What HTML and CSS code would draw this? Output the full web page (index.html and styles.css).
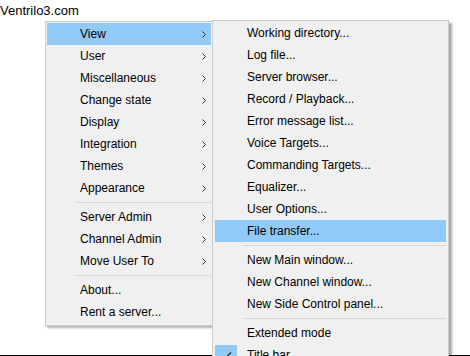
FILE: index.html
```html
<!DOCTYPE html>
<html lang="en">
<head>
  <meta charset="UTF-8">
  <title>Ventrilo menu</title>
  <link rel="stylesheet" href="styles.css">
</head>
<body>
  <div class="page">
    <div class="site">Ventrilo3.com</div>
  </div>

  <div class="menu main-menu">
    <div class="item active">View<span class="arrow"></span></div>
    <div class="item">User<span class="arrow"></span></div>
    <div class="item">Miscellaneous<span class="arrow"></span></div>
    <div class="item">Change state<span class="arrow"></span></div>
    <div class="item">Display<span class="arrow"></span></div>
    <div class="item">Integration<span class="arrow"></span></div>
    <div class="item">Themes<span class="arrow"></span></div>
    <div class="item">Appearance<span class="arrow"></span></div>
    <div class="sep"></div>
    <div class="item">Server Admin<span class="arrow"></span></div>
    <div class="item">Channel Admin<span class="arrow"></span></div>
    <div class="item">Move User To<span class="arrow"></span></div>
    <div class="sep"></div>
    <div class="item">About...</div>
    <div class="item">Rent a server...</div>
  </div>

  <div class="menu sub-menu">
    <div class="item">Working directory...</div>
    <div class="item">Log file...</div>
    <div class="item">Server browser...</div>
    <div class="item">Record / Playback...</div>
    <div class="item">Error message list...</div>
    <div class="item">Voice Targets...</div>
    <div class="item">Commanding Targets...</div>
    <div class="item">Equalizer...</div>
    <div class="item">User Options...</div>
    <div class="item active">File transfer...</div>
    <div class="sep"></div>
    <div class="item">New Main window...</div>
    <div class="item">New Channel window...</div>
    <div class="item">New Side Control panel...</div>
    <div class="sep"></div>
    <div class="item">Extended mode</div>
    <div class="item checked">
      <span class="check">
        <svg width="22" height="22" viewBox="0 0 22 22"><path d="M6 11.5 L9 14.5 L16 7.5" fill="none" stroke="#222" stroke-width="1.2"/></svg>
      </span>Title bar
    </div>
  </div>
</body>
</html>
```

FILE: styles.css
```css
body {
  margin: 0;
  font-family: "Liberation Sans", Arial, sans-serif;
  background: #fff;
  color: #000;
  overflow: hidden;
}

.page {
  height: 355px;
  border-bottom: 1px solid #000;
}

.site {
  font-size: 13px;
  line-height: 20px;
  padding-top: 1px;
}

.menu {
  position: absolute;
  box-sizing: border-box;
  background: #f0f0f0;
  border: 1px solid #cccccc;
  font-size: 12px;
}

.main-menu {
  left: 45px;
  top: 21px;
  width: 168px;
  padding: 1px 1px 2px 1px;
  box-shadow: 2px 2px 2px rgba(0, 0, 0, 0.3);
  z-index: 1;
}

.sub-menu {
  left: 212px;
  top: 20px;
  width: 237px;
  padding: 1px 1px 0 2px;
  box-shadow: 3px 3px 2px rgba(0, 0, 0, 0.35);
  z-index: 2;
}

.item {
  display: flex;
  align-items: center;
  height: 22px;
  white-space: nowrap;
}

.main-menu .item {
  padding: 0 5px 0 33px;
}

.sub-menu .item {
  padding-left: 32px;
  margin-right: 1px;
}

.item.active {
  background: #91c9f7;
}

.arrow {
  margin-left: auto;
  width: 4px;
  height: 7px;
  background: no-repeat center / 4px 7px url("data:image/svg+xml,%3Csvg xmlns='http://www.w3.org/2000/svg' width='4' height='7' viewBox='0 0 4 7'%3E%3Cpath d='M0.5 0.5 L3.5 3.5 L0.5 6.5' fill='none' stroke='%23333' stroke-width='1'/%3E%3C/svg%3E");
}

.sep {
  height: 7px;
  position: relative;
}

.sep::after {
  content: "";
  position: absolute;
  top: 3px;
  right: 0;
  height: 1px;
  background: #d7d7d7;
}

.main-menu .sep::after {
  left: 29px;
}

.sub-menu .sep::after {
  left: 28px;
  right: 1px;
}

.sub-menu .item.checked {
  padding-left: 0;
}

.check {
  width: 22px;
  height: 22px;
  margin-top: 2px;
  background: #91c9f7;
  margin-right: 10px;
  display: flex;
}
```
